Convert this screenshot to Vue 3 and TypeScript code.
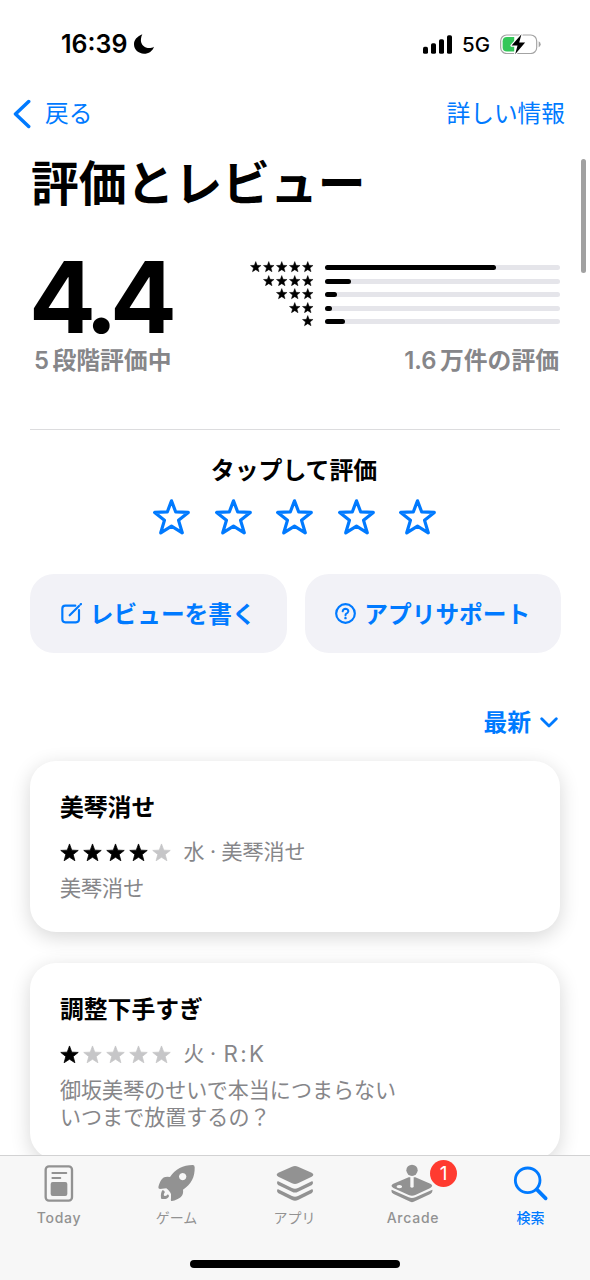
<script setup lang="ts">
interface Review {
  title: string
  stars: number
  day: string
  author: string
  lines: string[]
}

const starPath =
  'M50 5 L62 37.5 L96 39 L69.5 60.5 L78.5 93.5 L50 75 L21.5 93.5 L30.5 60.5 L4 39 L38 37.5 Z'

const distribution = [
  { stars: 5, width: 171 },
  { stars: 4, width: 25.5 },
  { stars: 3, width: 11.5 },
  { stars: 2, width: 6.5 },
  { stars: 1, width: 20 },
]

const reviews: Review[] = [
  { title: '美琴消せ', stars: 4, day: '水', author: '美琴消せ', lines: ['美琴消せ'] },
  {
    title: '調整下手すぎ',
    stars: 1,
    day: '火',
    author: 'R:K',
    lines: ['御坂美琴のせいで本当につまらない', 'いつまで放置するの？'],
  },
]
</script>

<template>
  <div class="screen">
    <header class="status">
      <div class="clock">
        <span class="time">16:39</span>
        <svg class="moon" viewBox="0 0 60 60">
          <path d="M25 1 C8 8 0 19 0 31 C0 47 13 59 30 59 C44 59 56 51 60 38 C54 42 47 43 41 42 C27 39 19 27 21 14 C21.5 9 23 5 25 1 Z" />
        </svg>
      </div>
      <div class="signals">
        <svg class="bars" viewBox="0 0 87 56">
          <rect x="0" y="35" width="15" height="21" rx="5" />
          <rect x="24" y="24" width="15" height="32" rx="5" />
          <rect x="48" y="12" width="15" height="44" rx="5" />
          <rect x="72" y="0" width="15" height="56" rx="5" />
        </svg>
        <span class="network">5G</span>
        <svg class="battery" viewBox="0 0 124 62">
          <rect x="2" y="3" width="109" height="56" rx="18" fill="#fff" stroke="#a3a3a3" stroke-width="3.5" />
          <path d="M21 9 H43 V53 H21 Q8 53 8 40 V22 Q8 9 21 9Z" fill="#34c759" />
          <path d="M117 22 Q123 25 123 31 Q123 37 117 40Z" fill="#a3a3a3" />
          <path
            d="M65 1 L35 35 H53 L46 61 L76 26 H58 Z"
            fill="#000"
            stroke="#fff"
            stroke-width="7"
            paint-order="stroke"
            stroke-linejoin="round"
          />
        </svg>
      </div>
    </header>

    <nav class="nav">
      <span class="back">
        <svg viewBox="0 0 18 30"><path d="M15.7 2.5 L2.5 15 L15.7 27.5" /></svg>
        戻る
      </span>
      <span>詳しい情報</span>
    </nav>

    <main class="content">
      <h1>評価とレビュー</h1>

      <section class="summary">
        <div class="score">4.4</div>
        <div class="distribution">
          <div v-for="row in distribution" :key="row.stars" class="dist-row">
            <div class="mini-stars">
              <svg v-for="n in row.stars" :key="n" viewBox="0 0 100 100"><path :d="starPath" /></svg>
            </div>
            <div class="track"><div class="fill" :style="{ width: row.width + 'px' }"></div></div>
          </div>
        </div>
      </section>
      <div class="captions">
        <span class="caption-left"><span class="digit">5</span>段階評価中</span>
        <span><span class="digit">1.6</span>万件の評価</span>
      </div>

      <hr />

      <p class="prompt">タップして評価</p>
      <div class="rate">
        <svg v-for="n in 5" :key="n" viewBox="0 0 110 106">
          <path d="M55 5 L67.5 38 L105 39.5 L76 63 L87 100 L55 80 L23 100 L34 63 L5 39.5 L42.5 38 Z" />
        </svg>
      </div>

      <div class="actions">
        <button type="button">
          <svg class="compose" viewBox="0 0 63 63">
            <path d="M43 8 H13 Q4 8 4 17 V49 Q4 58 13 58 H45 Q54 58 54 49 V21" stroke-width="6.5" />
            <path d="M26 37 L54 9" stroke-width="6.5" />
            <path d="M58.5 4.5 L60 3" stroke-width="6.5" />
          </svg>
          <span>レビューを書く</span>
        </button>
        <button type="button">
          <svg viewBox="0 0 63 63">
            <circle cx="31.5" cy="31.5" r="28" stroke-width="6.5" />
            <path d="M23 25 Q24 17 32 17 Q40 18 40 25 Q39 30 34 32 Q31 34 31.5 37" stroke-width="6" />
            <path d="M31.5 45 V45.5" stroke-width="7" />
          </svg>
          <span>アプリサポート</span>
        </button>
      </div>

      <div class="sort">
        <span>最新</span>
        <svg viewBox="0 0 18 11"><path d="M1.7 1.7 L9 9 L16.3 1.7" /></svg>
      </div>

      <article v-for="review in reviews" :key="review.title" class="card">
        <h2>{{ review.title }}</h2>
        <div class="meta">
          <div class="stars">
            <svg v-for="n in 5" :key="n" :class="{ off: n > review.stars }" viewBox="0 0 100 100">
              <path :d="starPath" />
            </svg>
          </div>
          <span>{{ review.day }}</span><span class="dot">·</span><span :class="{ latin: review.author === 'R:K' }">{{ review.author }}</span>
        </div>
        <p v-for="line in review.lines" :key="line">{{ line }}</p>
      </article>
    </main>

    <footer class="tabbar">
      <div class="tabs">
        <div class="tab">
          <svg viewBox="111 69 132 120">
            <rect x="137" y="79" width="79" height="103" rx="10" fill="none" stroke="#929292" stroke-width="7" />
            <path d="M157 99 H199 M157 114 H181" stroke="#929292" stroke-width="5.5" stroke-linecap="round" />
            <rect x="152" y="126" width="50" height="42" rx="6" />
          </svg>
          <span class="latin-label">Today</span>
        </div>
        <div class="tab">
          <svg viewBox="465 69 132 120">
            <path
              fill-rule="evenodd"
              d="M578 75 Q584 75 584 82 C585 111 574 133 549 149 C551 163 545 171 533 177 C524 182 515 184 513 182 Q512 180 513 174 L513 162 C511 157 505 150 499 145 L480 147 Q475 147 475 142 C478 128 484 116 493 112 Q499 109 510 111 C526 87 549 75 578 75 Z M548 99 a11 11 0 1 0 0.1 0 Z"
            />
            <path d="M488 150 C492 151 495 155 494 158 C491 161 490 166 494 168 C498 169 501 166 503 163 Q507 165 507 169 C504 177 495 178 486 177 Q483 177 483 174 C482 164 483 156 488 150 Z" />
          </svg>
          <span>ゲーム</span>
        </div>
        <div class="tab">
          <svg viewBox="819 69 132 120">
            <path d="M876 80 Q885 76 894 80 L935 98 Q945 104 935 110 L894 130 Q885 134 876 130 L835 110 Q825 104 835 98 Z" />
            <path d="M833 123 L876 144 Q885 148 894 144 L937 123 Q942 129 936 135 L894 155 Q885 160 876 155 L834 135 Q828 129 833 123 Z" />
            <path d="M833 147 L876 168 Q885 172 894 168 L937 147 Q942 153 936 159 L894 180 Q885 184 876 180 L834 159 Q828 153 833 147 Z" />
          </svg>
          <span>アプリ</span>
        </div>
        <div class="tab">
          <svg viewBox="303 69 132 120">
            <path
              fill-rule="evenodd"
              d="M356 112 L310 131 Q299 137 310 144 L356 165 Q366 169 376 165 L421 144 Q432 137 421 131 L376 112 H371 V141 Q366 145 361 141 V112 Z M328 135 a8 5 0 1 0 0.1 0 Z"
            />
            <circle cx="366" cy="91" r="17" />
            <path d="M305 149 L356 172 Q366 176 376 172 L427 149 Q429 158 421 162 L376 183 Q366 190 356 183 L311 162 Q302 158 305 149 Z" />
          </svg>
          <span class="latin-label">Arcade</span>
          <b class="badge">1</b>
        </div>
        <div class="tab active">
          <svg viewBox="657 69 132 120">
            <circle cx="713" cy="121" r="37" fill="none" stroke="#007aff" stroke-width="8.5" />
            <path d="M741 149 L767 175" stroke="#007aff" stroke-width="11" stroke-linecap="round" />
          </svg>
          <span>検索</span>
        </div>
      </div>
      <div class="home"></div>
    </footer>

    <div class="scrollbar"></div>
  </div>
</template>

<style>
body {
  margin: 0;
  background: #fff;
}
</style>

<style scoped>
.screen {
  position: relative;
  width: 590px;
  height: 1280px;
  overflow: hidden;
  display: flex;
  flex-direction: column;
  background: #fff;
  color: #000;
  font-family: Inter, 'Noto Sans CJK JP', sans-serif;
}
svg {
  display: block;
  flex: none;
}
h1, h2, p {
  margin: 0;
}
.status {
  height: 88px;
  flex: none;
  box-sizing: border-box;
  padding: 0 49px 0 61px;
  display: flex;
  align-items: center;
  justify-content: space-between;
}
.clock, .signals {
  display: flex;
  align-items: center;
}
.time {
  font-size: 25px;
  font-weight: 600;
  line-height: 30px;
  width: 73px;
  white-space: nowrap;
}
.moon {
  width: 20px;
  height: 20px;
}
.bars {
  width: 29px;
  height: 19px;
}
.network {
  width: 48px;
  padding-left: 10px;
  box-sizing: border-box;
  font-size: 20.5px;
  font-weight: 500;
  line-height: 24px;
  padding-top: 1px;
}
.battery {
  width: 41px;
  height: 20.5px;
}
.nav {
  height: 52px;
  flex: none;
  box-sizing: border-box;
  padding: 0 25px 0 13px;
  display: flex;
  align-items: center;
  justify-content: space-between;
  font-size: 23.7px;
  line-height: 30px;
  color: #007aff;
}
.back {
  display: flex;
  align-items: center;
  gap: 14px;
}
.back svg {
  width: 18px;
  height: 30px;
  fill: none;
  stroke: #007aff;
  stroke-width: 3.5;
  stroke-linecap: round;
  stroke-linejoin: round;
}
.content {
  flex: 1;
  min-height: 0;
  overflow: hidden;
  padding: 12px 30px 0;
}
h1 {
  padding-left: 1px;
  font-size: 47.8px;
  line-height: 64px;
  font-weight: 700;
  white-space: nowrap;
}
.summary {
  margin-top: 45px;
  height: 72px;
  display: flex;
  justify-content: space-between;
}
.score {
  margin-left: -1px;
  font-size: 99px;
  line-height: 72px;
  font-weight: 700;
  letter-spacing: -7.8px;
}
.distribution {
  display: flex;
  flex-direction: column;
}
.dist-row {
  height: 13.5px;
  display: flex;
  align-items: center;
  justify-content: flex-end;
}
.mini-stars {
  display: flex;
  gap: 1.5px;
  margin-right: 11.5px;
  margin-top: -2px;
}
.mini-stars svg {
  width: 11.5px;
  height: 11.5px;
  stroke: #000;
  stroke-width: 4;
  stroke-linejoin: round;
}
.track {
  width: 235px;
  height: 5px;
  border-radius: 3px;
  background: #e5e5ea;
}
.fill {
  height: 5px;
  border-radius: 3px;
  background: #000;
}
.captions {
  margin-top: 15px;
  display: flex;
  justify-content: space-between;
  padding-right: 1px;
  font-size: 23.8px;
  line-height: 26px;
  font-weight: 700;
  color: #868689;
}
.caption-left {
  padding-left: 4px;
}
.digit {
  font-weight: 600;
  margin-right: 3.5px;
}
hr {
  margin: 55px 0 0;
  border: 0;
  height: 1px;
  background: #dcdcde;
}
.prompt {
  margin-top: 28px;
  padding-right: 2px;
  text-align: center;
  font-size: 23.9px;
  line-height: 26px;
  font-weight: 700;
}
.rate {
  margin-top: 14.5px;
  padding-right: 1px;
  display: flex;
  justify-content: center;
  gap: 24.5px;
}
.rate svg {
  width: 37px;
  height: 36px;
  fill: none;
  stroke: #007aff;
  stroke-width: 9.5;
  stroke-linejoin: round;
}
.actions {
  margin: 39px -1px 0 0;
  display: flex;
  gap: 18px;
}
button {
  flex: 1;
  height: 79px;
  padding: 1px 0 0;
  border: 0;
  border-radius: 24px;
  background: #f2f2f7;
  color: #007aff;
  font: inherit;
  font-size: 23.7px;
  font-weight: 700;
  line-height: 26px;
  display: flex;
  align-items: center;
  justify-content: center;
  gap: 8px;
  white-space: nowrap;
}
button span {
  padding-top: 2px;
}
button svg {
  width: 21px;
  height: 21px;
  fill: none;
  stroke: #007aff;
  stroke-linecap: round;
}
.sort {
  margin-top: 57px;
  display: flex;
  align-items: center;
  justify-content: flex-end;
  gap: 9px;
  padding-right: 2px;
  font-size: 23.8px;
  line-height: 26px;
  font-weight: 700;
  color: #007aff;
}
.sort svg {
  width: 18px;
  height: 11px;
  fill: none;
  stroke: #007aff;
  stroke-width: 2.8;
  stroke-linecap: round;
  stroke-linejoin: round;
}
.card {
  height: 171px;
  box-sizing: border-box;
  margin-top: 25px;
  padding: 34px 30px 0;
  border-radius: 26px;
  background: #fff;
  box-shadow: 0 5px 20px rgba(0, 0, 0, 0.16);
}
.card + .card {
  margin-top: 31px;
  height: 196px;
}
h2 {
  font-size: 23.8px;
  line-height: 26px;
  font-weight: 700;
}
.meta {
  margin-top: 18px;
  height: 26px;
  display: flex;
  align-items: center;
  font-size: 21px;
  line-height: 26px;
  color: #868689;
}
.stars {
  display: flex;
  gap: 4px;
  margin: 2px 13px 0 -0.5px;
}
.stars svg {
  width: 19px;
  height: 19px;
  fill: #000;
  stroke: #000;
  stroke-width: 4;
  stroke-linejoin: round;
}
.stars .off {
  fill: #c6c6c8;
  stroke: #c6c6c8;
}
.dot {
  width: 17px;
  text-align: center;
}
.latin {
  font-size: 22.3px;
  letter-spacing: 2.4px;
  padding-left: 2px;
}
.card p {
  font-size: 21.05px;
  line-height: 27px;
  color: #868689;
  white-space: nowrap;
}
.card .meta + p {
  margin-top: 10px;
}
.tabbar {
  height: 125px;
  flex: none;
  box-sizing: border-box;
  border-top: 1px solid #d2d2d3;
  background: #f7f7f7;
  position: relative;
  z-index: 1;
}
.tabs {
  display: flex;
  height: 104px;
}
.tab {
  position: relative;
  flex: 1;
  padding-top: 7px;
  display: flex;
  flex-direction: column;
  align-items: center;
  color: #929292;
  font-size: 14px;
  line-height: 20px;
}
.tab span {
  padding-right: 1px;
}
.tab svg {
  width: 44px;
  height: 40px;
  margin-bottom: 4.5px;
  fill: #929292;
}
.tab .latin-label {
  padding-right: 0;
  letter-spacing: 0.75px;
  font-weight: 500;
  font-size: 14px;
}
.tab.active {
  color: #007aff;
  font-weight: 500;
}
.badge {
  position: absolute;
  left: 76px;
  top: 4px;
  width: 27px;
  height: 27px;
  border-radius: 50%;
  background: #ff3b30;
  color: #fff;
  font-size: 19px;
  line-height: 27px;
  font-weight: 400;
  text-align: center;
}
.home {
  width: 210px;
  height: 8px;
  margin: 0 auto;
  border-radius: 4px;
  background: #000;
}
.scrollbar {
  position: absolute;
  right: 4px;
  top: 159px;
  width: 5px;
  height: 114px;
  border-radius: 3px;
  background: #a1a1a1;
}
</style>
